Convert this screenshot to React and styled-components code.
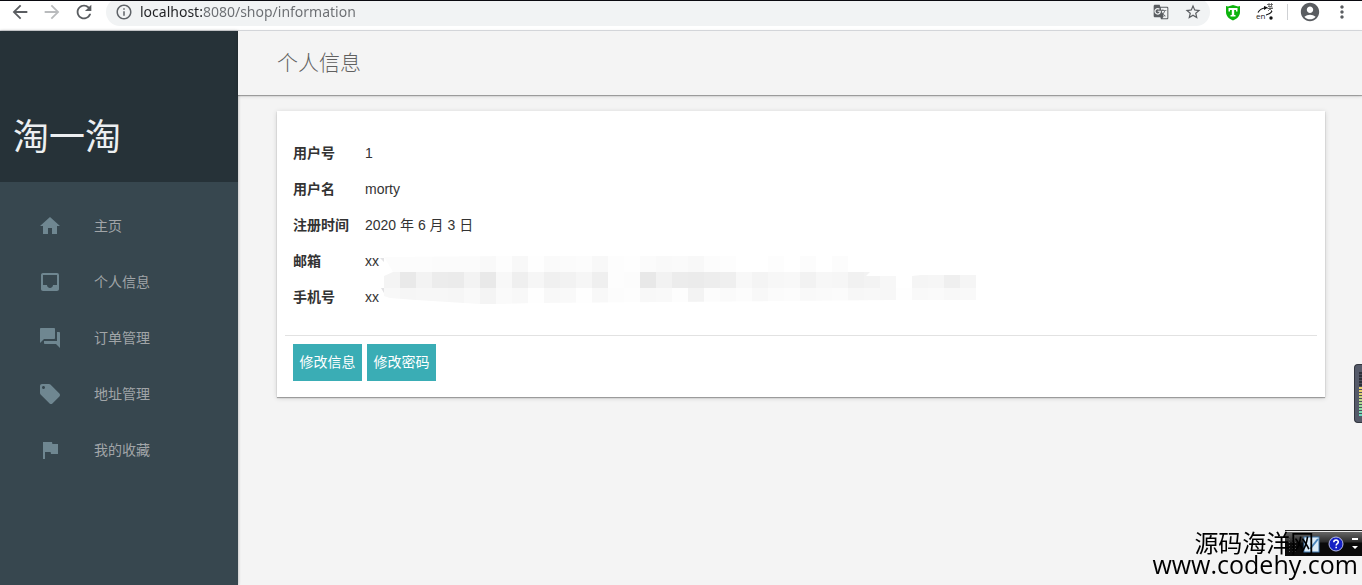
import React from 'react';
import styled, { createGlobalStyle } from 'styled-components';
import {
  MdAccountCircle,
  MdArrowBack,
  MdArrowForward,
  MdFlag,
  MdForum,
  MdGTranslate,
  MdHome,
  MdInbox,
  MdInfoOutline,
  MdLocalOffer,
  MdMoreVert,
  MdRefresh,
  MdStarBorder,
} from 'react-icons/md';

const menu = [
  { label: '主页', icon: MdHome },
  { label: '个人信息', icon: MdInbox },
  { label: '订单管理', icon: MdForum },
  { label: '地址管理', icon: MdLocalOffer },
  { label: '我的收藏', icon: MdFlag },
];

const details = [
  { label: '用户号', value: '1' },
  { label: '用户名', value: 'morty' },
  { label: '注册时间', value: '2020 年 6 月 3 日' },
  { label: '邮箱', value: 'xx', masked: true },
  { label: '手机号', value: 'xx' },
];

// grey level of every 16px tile, one list per row
const tiles = [
  'fc fc fc fb fb fb f9 fd f8 fe fa fb fc f8 fd fe fb f9 fa f8 fc fd ff ff fd ff fc ff fc ff ff ff ff ff ff ff ff',
  'f4 e9 f3 ec eb f3 e9 f8 ef f6 f0 f2 f6 ef fd fc e8 f2 ec eb ed ef f8 f4 f7 f8 f2 f7 f6 f1 f3 f7 ff f5 f6 ef f5',
  'f8 f6 f7 f7 f6 f9 f4 fa f8 fe f8 f9 fe f8 fc fd f8 f9 fd f3 fc fa fc f8 fb fc f9 fa fb f7 f8 f7 fe f9 fa f8 f9',
].map((row) => row.split(' '));

const Mosaic = () => (
  <MosaicSvg width="594" height="48" viewBox="0 0 594 48" aria-hidden="true">
    <clipPath id="brush">
      <path d="M0 1L130 0H464V16H486L482 20H512V22H528V20L537 19H594V44H512L400 45L150 47L112 48H96L64 46L32 44L6 42L0 40V20L9 16Z" />
    </clipPath>
    <g clipPath="url(#brush)">
      {tiles.map((row, y) => row.map((tone, x) => (
        <rect key={`${y}-${x}`} x={x * 16} y={y * 16} width="16" height="16" fill={`#${tone}${tone}${tone}`} />
      )))}
    </g>
    <path d="M-4 2H0V6ZM-3 32H0V37Z" fill="#e2e2e4" />
  </MosaicSvg>
);

const ShieldIcon = () => (
  <svg width="16" height="17" viewBox="0 0 16 17">
    <path d="M1 2L3 2.500L8 1L13 2.500L15 2V8C15 12 12 15 8 16.500C4 15 1 12 1 8Z" fill="#0db30d" />
    <path d="M3.500 4H12.500V7.500H11V6H9.200V11H10.500V12.500H5.500V11H6.800V6H5V7.500H3.500Z" fill="#fff" />
  </svg>
);

const LanguageIcon = () => (
  <svg width="18" height="18" viewBox="0 0 18 18">
    <path d="M2 9.500C4 6 6 5 10 5M16 8C15 10 12 11.500 10 12" fill="none" stroke="#111" strokeWidth="1.200" />
    <path d="M8 3L12 4.500L8 7Z" fill="#111" />
    <path d="M11 1.500H17M13 0V3M15.500 0V3M12 3.500H16V5.500H11.500H17M14 3.500V6M14 6L12 8M14 6L16 8" fill="none" stroke="#555" strokeWidth=".8" />
    <circle cx="15" cy="15" r="1.700" fill="#111" />
    <text x="0" y="16" fontSize="8" fontFamily="Open Sans, sans-serif" fill="#222">en</text>
  </svg>
);

const HelpIcon = () => (
  <svg width="16" height="16" viewBox="0 0 16 16">
    <circle cx="8" cy="8" r="7" fill="#1420c4" stroke="#b9bde8" />
    <path d="M5.800 6.300C5.800 3.300 10.400 3.400 10.300 6C10.200 7.700 8.200 7.500 8.200 9.400M8.200 10.800V12.300" fill="none" stroke="#fff" strokeWidth="1.600" />
  </svg>
);

const PenIcon = () => (
  <svg width="17" height="17" viewBox="0 0 17 17">
    <rect x="1" y="1" width="15" height="15" fill="#dcecf8" stroke="#3f78ae" />
    <path d="M7 13L15 3" stroke="#4a86bd" strokeWidth="2" />
  </svg>
);

const App = () => {
  return (
    <>
      <GlobalStyle />
      <Page>
        <Toolbar>
          <ToolButton aria-label="Back"><MdArrowBack size={22} /></ToolButton>
          <ToolButton aria-label="Forward" disabled><MdArrowForward size={22} /></ToolButton>
          <ToolButton aria-label="Reload"><MdRefresh size={22} /></ToolButton>
          <AddressBar>
            <MdInfoOutline size={18} />
            <AddressInput aria-label="Address" defaultValue="localhost:8080/shop/information" spellCheck="false" />
            <ToolButton aria-label="Translate"><MdGTranslate size={16} /></ToolButton>
            <ToolButton aria-label="Bookmark"><MdStarBorder size={18} /></ToolButton>
          </AddressBar>
          <ToolButton aria-label="Shield"><ShieldIcon /></ToolButton>
          <ToolButton aria-label="Language"><LanguageIcon /></ToolButton>
          <ToolDivider />
          <ToolButton aria-label="Profile"><MdAccountCircle size={22} /></ToolButton>
          <ToolButton aria-label="More"><MdMoreVert size={20} /></ToolButton>
        </Toolbar>

        <Layout>
          <Sidebar>
            <Brand>淘一淘</Brand>
            <Menu>
              {menu.map(({ label, icon: Icon }) => (
                <MenuLink href="#" key={label}>
                  <Icon size={24} />
                  {label}
                </MenuLink>
              ))}
            </Menu>
          </Sidebar>

          <Main>
            <PageHeader>
              <Title>个人信息</Title>
            </PageHeader>
            <Card>
              <DetailTable>
                <tbody>
                  {details.map(({ label, value, masked }) => (
                    <tr key={label}>
                      <DetailLabel scope="row">{label}</DetailLabel>
                      <DetailValue>
                        {value}
                        {masked && <Mosaic />}
                      </DetailValue>
                    </tr>
                  ))}
                </tbody>
              </DetailTable>
              <Actions>
                <ActionButton type="button">修改信息</ActionButton>
                <ActionButton type="button">修改密码</ActionButton>
              </Actions>
            </Card>
          </Main>
        </Layout>

        <SideMeter />
        <LanguageBar>
          <Grip />
          <PenIcon />
          <HelpIcon />
          <svg width="8" height="14" viewBox="0 0 8 14">
            <path d="M1 1H7V3H1ZM1 9H7L4 12Z" fill="#fff" />
          </svg>
        </LanguageBar>
        <Watermark>
          <WatermarkName>源码海洋网</WatermarkName>
          <WatermarkSite>www.codehy.com</WatermarkSite>
        </Watermark>
      </Page>
    </>
  );
};

export default App;

const GlobalStyle = createGlobalStyle`
  * {
    box-sizing: border-box;
  }

  body {
    margin: 0;
    background: #f4f4f4;
    color: #333;
    font-family: "Liberation Sans", "Noto Sans CJK SC", sans-serif;
    font-size: 14px;
    line-height: 20px;
  }

  svg {
    display: block;
    flex-shrink: 0;
  }
`

const Page = styled.div`
  display: flex;
  flex-direction: column;
  min-height: 100vh;
`

const Toolbar = styled.header`
  display: flex;
  align-items: flex-end;
  height: 31px;
  padding: 0 4px 4px;
  overflow: hidden;
  background: #fff;
  border-top: 1px solid #0a0a10;
  border-bottom: 1px solid #dadce0;
`

const ToolButton = styled.button`
  display: flex;
  flex-shrink: 0;
  align-items: center;
  justify-content: center;
  width: 32px;
  height: 28px;
  padding: 0;
  border: 0;
  background: none;
  color: #5a5d61;

  &:disabled {
    color: #b9bbbd;
  }
`

const ToolDivider = styled.span`
  width: 1px;
  height: 16px;
  margin: 0 6px 6px;
  background: #cfd1d4;
`

const AddressBar = styled.div`
  display: flex;
  flex: 1;
  align-items: center;
  height: 28px;
  margin: 0 7px 0 6px;
  padding: 0 1px 0 9px;
  border-radius: 14px;
  background: #f1f3f4;
  color: #5f6368;
`

/* host is darker than the rest of the address */
const AddressInput = styled.input`
  flex: 1;
  min-width: 0;
  height: 24px;
  margin-left: 7px;
  padding: 0 0 2px;
  border: 0;
  outline: 0;
  background: linear-gradient(90deg, #202124 63px, #6a6d71 63px);
  background-clip: text;
  color: transparent;
  font-family: "Noto Sans", sans-serif;
  font-size: 14px;
`

const Layout = styled.div`
  display: flex;
  flex: 1;
`

const Sidebar = styled.aside`
  flex: 0 0 238px;
  background: #37474f;
  box-shadow: 0 0 3px rgba(0, 0, 0, 0.3);
`

const Brand = styled.div`
  display: flex;
  align-items: flex-end;
  height: 151px;
  padding: 0 13px 20px;
  background: #263238;
  color: #eceff1;
  font-size: 36px;
  line-height: 48px;
`

const Menu = styled.nav`
  padding-top: 16px;
`

const MenuLink = styled.a`
  display: flex;
  align-items: center;
  gap: 32px;
  height: 56px;
  padding: 0 38px;
  color: #a1a5a8;
  text-decoration: none;

  svg {
    color: #6f8791;
  }
`

const Main = styled.main`
  flex: 1;
  min-width: 0;
`

const PageHeader = styled.div`
  display: flex;
  align-items: center;
  height: 64px;
  padding: 0 39px;
  box-shadow: 0 1px 1px rgba(0, 0, 0, 0.3), 0 1px 4px rgba(0, 0, 0, 0.14);
  background: #f4f4f4;
`

const Title = styled.h1`
  margin: 0;
  color: #606060;
  font-size: 21px;
  font-weight: 300;
  line-height: 28px;
`

const Card = styled.section`
  margin: 16px 37px 16px 39px;
  padding: 24px 8px 8px;
  background: #fff;
  box-shadow: 0 1px 1px rgba(0, 0, 0, 0.3), 0 1px 5px rgba(0, 0, 0, 0.16);
`

const DetailTable = styled.table`
  margin: 0 8px 20px;
  border-collapse: collapse;
`

const DetailLabel = styled.th`
  width: 72px;
  height: 36px;
  padding: 0;
  text-align: left;
  font-weight: 700;
`

const DetailValue = styled.td`
  position: relative;
  height: 36px;
  padding: 0;
`

const MosaicSvg = styled.svg`
  position: absolute;
  top: 13px;
  left: 19px;
  overflow: visible;
`

const Actions = styled.div`
  display: flex;
  gap: 5px;
  padding: 8px;
  border-top: 1px solid #e2e2e2;
`

const ActionButton = styled.button`
  width: 69px;
  height: 37px;
  padding: 0 0 3px;
  border: 0;
  background: #3aadb5;
  color: #fff;
  font-family: inherit;
  font-size: 14px;
`

const SideMeter = styled.div`
  position: fixed;
  top: 364px;
  right: 0;
  width: 8px;
  height: 59px;
  padding: 7px 0 6px 4px;
  border: 1px solid #33363f;
  border-right: 0;
  border-radius: 4px 0 0 4px;
  background: #555a69;

  &::before {
    content: "";
    display: block;
    height: 100%;
    background:
      repeating-linear-gradient(transparent 0 2px, #4b4f5c 2px 3px),
      linear-gradient(#2c2f38 0 15px, #e6cf6c 15px 20px, #a5dc93 32px, #69dcc4);
  }
`

const LanguageBar = styled.div`
  position: fixed;
  right: 0;
  bottom: 29px;
  display: flex;
  align-items: center;
  justify-content: space-between;
  width: 77px;
  height: 26px;
  padding: 2px 3px 0 3px;
  background: linear-gradient(#222 0 1px, #eee 1px 2px, #666 2px, #2b2b2b 12px, #0a0a0a 13px);
`

const Grip = styled.span`
  width: 8px;
  height: 18px;
  background: radial-gradient(circle, #555 1px, transparent 1px) 0 0 / 3px 3px;
`

const Watermark = styled.div`
  position: fixed;
  right: 4px;
  bottom: 11px;
  color: #000;
  font-family: "Open Sans", "Noto Sans CJK SC", sans-serif;
`

const WatermarkName = styled.div`
  padding-left: 42px;
  font-size: 24px;
  line-height: 22px;
`

const WatermarkSite = styled.div`
  font-size: 25px;
  line-height: 20px;
`
